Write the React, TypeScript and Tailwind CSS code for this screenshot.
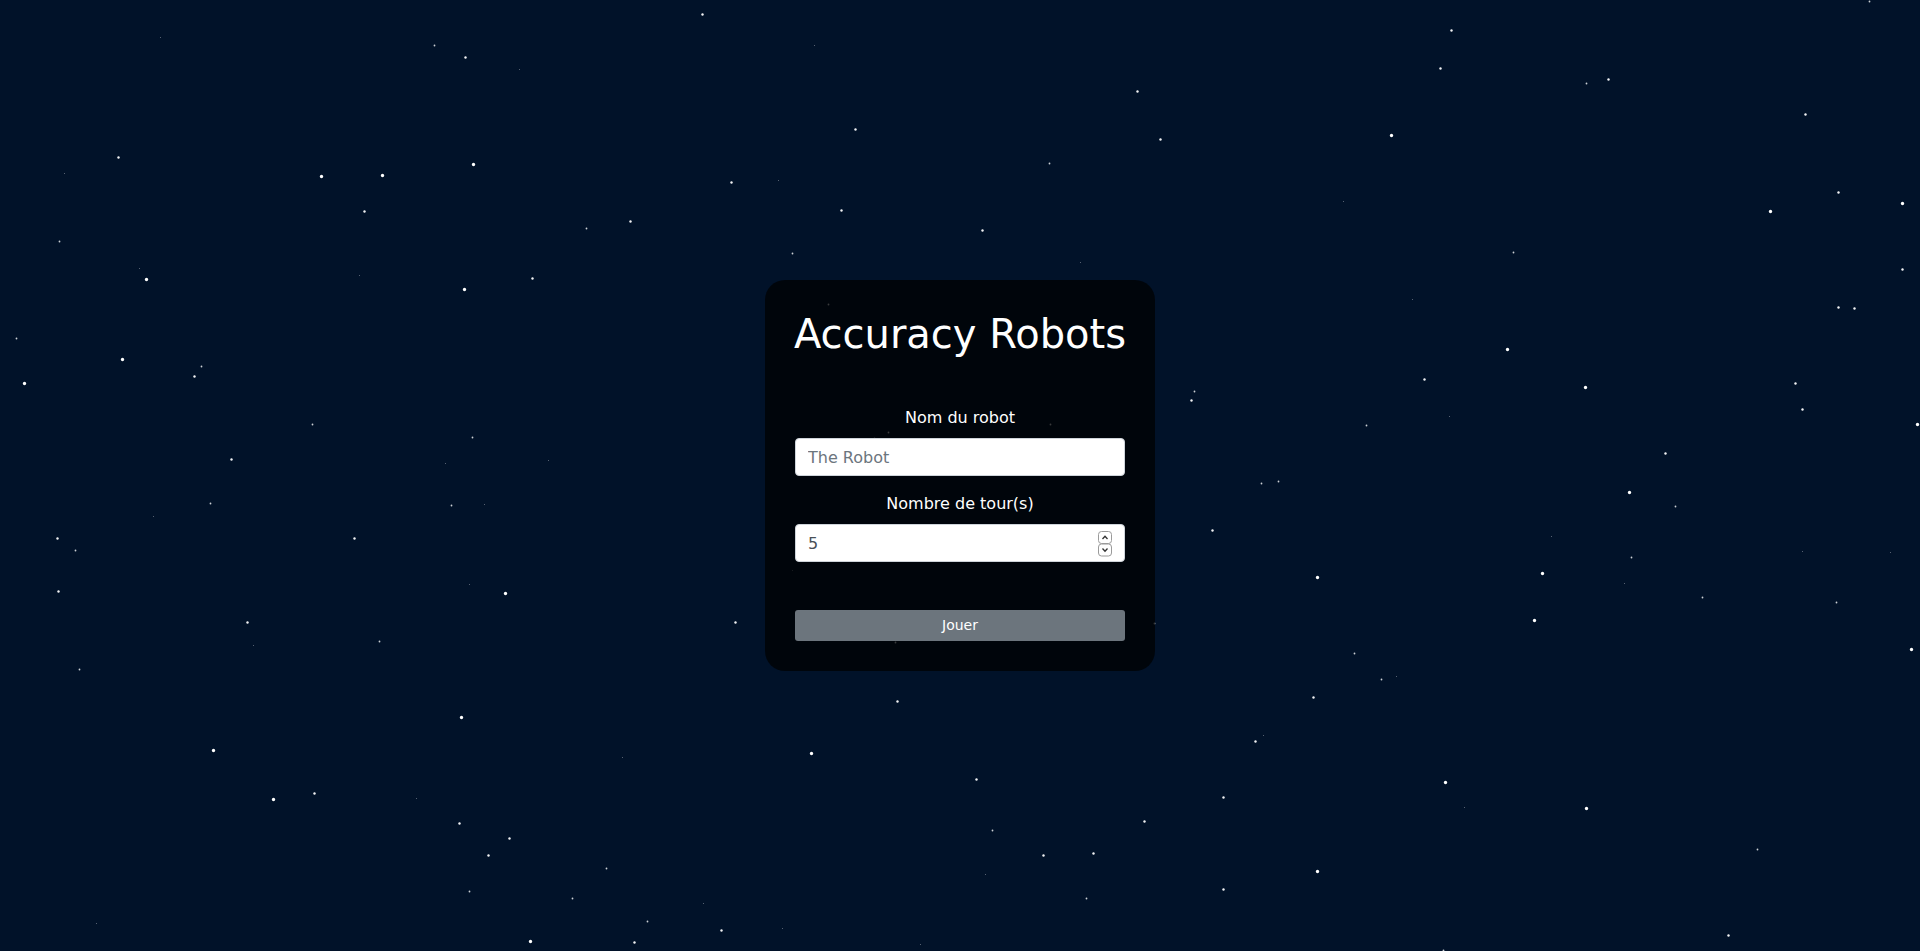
import React from "react";

type Star = [number, number, number];
// [x, y, size] size: 3 big, 2 medium, 1 small, 0 tiny
const STARS: Star[] = [
  [160, 37, 0], [434, 45, 1], [465, 57, 2], [519, 69, 0], [118, 157, 2], [64, 173, 0],
  [321, 176, 3], [382, 175, 3], [473, 164, 3], [364, 211, 2], [630, 221, 2], [586, 228, 1],
  [59, 241, 1], [139, 268, 0], [146, 279, 3], [359, 275, 0], [532, 278, 2], [464, 289, 3],
  [16, 338, 1], [122, 359, 3], [201, 366, 1], [194, 376, 2], [24, 383, 3], [312, 424, 1],
  [472, 437, 1], [231, 459, 2], [445, 463, 0], [548, 460, 0],
  [702, 14, 2], [814, 45, 0], [1137, 91, 2], [855, 129, 2], [1160, 139, 2], [1049, 163, 1],
  [731, 182, 2], [778, 180, 0], [841, 210, 2], [982, 230, 2], [792, 253, 1], [1080, 262, 0],
  [1194, 391, 1], [1191, 400, 2], [888, 432, 1], [1050, 424, 1], [874, 438, 1], [828, 304, 1],
  [1869, 1, 1], [1451, 30, 2], [1440, 68, 2], [1586, 83, 1], [1608, 79, 2], [1805, 114, 2],
  [1391, 135, 3], [1343, 201, 0], [1838, 192, 2], [1902, 203, 3], [1770, 211, 3], [1513, 252, 1],
  [1902, 269, 2], [1412, 299, 0], [1838, 307, 2], [1854, 308, 2], [1507, 349, 3], [1424, 379, 2],
  [1585, 387, 3], [1795, 383, 2], [1802, 409, 2], [1917, 424, 3], [1366, 425, 1], [1449, 416, 0],
  [1665, 453, 2],
  [210, 503, 1], [153, 516, 0], [451, 505, 1], [484, 504, 0], [57, 538, 2], [75, 550, 1],
  [354, 538, 2], [58, 591, 2], [469, 584, 0], [505, 593, 3], [247, 622, 2], [253, 645, 0],
  [379, 641, 1], [79, 669, 1], [461, 717, 3], [213, 750, 3], [622, 757, 0], [314, 793, 2],
  [273, 799, 3], [416, 798, 0], [459, 823, 2], [509, 838, 2], [488, 855, 2], [606, 868, 1],
  [469, 891, 1], [572, 898, 1], [96, 923, 0], [530, 941, 3], [634, 942, 2],
  [1261, 483, 1], [1278, 481, 1], [1212, 530, 2], [735, 622, 2], [1154, 623, 1], [895, 642, 1],
  [792, 570, 0], [897, 701, 2], [811, 753, 3], [1263, 735, 0], [1255, 741, 2], [976, 779, 2],
  [1223, 797, 2], [992, 830, 1], [1144, 821, 2], [1043, 855, 2], [1093, 853, 2], [985, 874, 0],
  [1223, 889, 2], [1086, 898, 1], [703, 903, 0], [647, 921, 1], [721, 930, 2], [782, 928, 0],
  [920, 944, 0], [985, 506, 1],
  [1629, 492, 3], [1675, 506, 1], [1551, 536, 0], [1631, 557, 1], [1542, 573, 3], [1317, 577, 3],
  [1624, 583, 0], [1702, 597, 1], [1836, 602, 1], [1802, 551, 0], [1890, 552, 0], [1534, 620, 3],
  [1911, 649, 3], [1354, 653, 1], [1381, 679, 1], [1396, 676, 0], [1313, 697, 2], [1445, 782, 3],
  [1464, 807, 0], [1586, 808, 3], [1757, 849, 1], [1317, 871, 3], [1728, 935, 2], [1443, 950, 1],
];

const R = [0.5, 0.9, 1.2, 1.65];
const O = [0.45, 0.8, 0.95, 1];

function StarField() {
  return (
    <svg
      className="absolute inset-0 h-full w-full"
      viewBox="0 0 1920 951"
      preserveAspectRatio="none"
      aria-hidden="true"
    >
      {STARS.map(([x, y, s], i) => (
        <circle key={i} cx={x + 0.5} cy={y + 0.5} r={R[s]} fill="#ffffff" opacity={O[s]} />
      ))}
    </svg>
  );
}

function Spinner() {
  return (
    <svg
      className="pointer-events-none absolute right-[13px] top-[7px]"
      width="14"
      height="26"
      viewBox="0 0 14 26"
      aria-hidden="true"
    >
      <rect x="0.5" y="0.5" width="13" height="12" rx="3" fill="#fff" stroke="#9a9a9a" />
      <rect x="0.5" y="13" width="13" height="12" rx="3" fill="#fff" stroke="#9a9a9a" />
      <path d="M4.5 8 L7 5.2 L9.5 8" fill="none" stroke="#333" strokeWidth="1.3" />
      <path d="M4.5 17.5 L7 20.3 L9.5 17.5" fill="none" stroke="#333" strokeWidth="1.3" />
    </svg>
  );
}

export default function App() {
  return (
    <div
      className="relative flex h-[951px] w-full items-center justify-center overflow-hidden bg-[#011229]"
      style={{ fontFamily: '"DejaVu Sans", Verdana, sans-serif' }}
    >
      <StarField />
      <div className="relative w-[390px] rounded-[20px] bg-[rgba(0,0,0,0.72)] p-[30px] text-white">
        <h1 className="mb-[48px] -mx-[4px] whitespace-nowrap text-center text-[40px] font-normal leading-[48px]">
          Accuracy Robots
        </h1>
        <label className="mb-2 block text-center text-[16px] font-normal leading-6">
          Nom du robot
        </label>
        <input
          type="text"
          placeholder="The Robot"
          className="mb-4 block h-[38px] w-full rounded-[4px] border border-[#ced4da] bg-white px-3 text-[16px] font-normal text-[#495057] outline-none placeholder:text-[#6c757d]"
        />
        <label className="mb-2 block text-center text-[16px] font-normal leading-6">
          Nombre de tour(s)
        </label>
        <div className="relative">
          <input
            type="text"
            defaultValue="5"
            className="block h-[38px] w-full rounded-[4px] border border-[#ced4da] bg-white px-3 text-[16px] font-normal text-[#495057] outline-none"
          />
          <Spinner />
        </div>
        <button
          type="button"
          className="mt-[48px] block h-[31px] w-full rounded-[3px] bg-[#6c757d] text-[14px] font-normal leading-[21px] text-white"
        >
          Jouer
        </button>
      </div>
    </div>
  );
}
